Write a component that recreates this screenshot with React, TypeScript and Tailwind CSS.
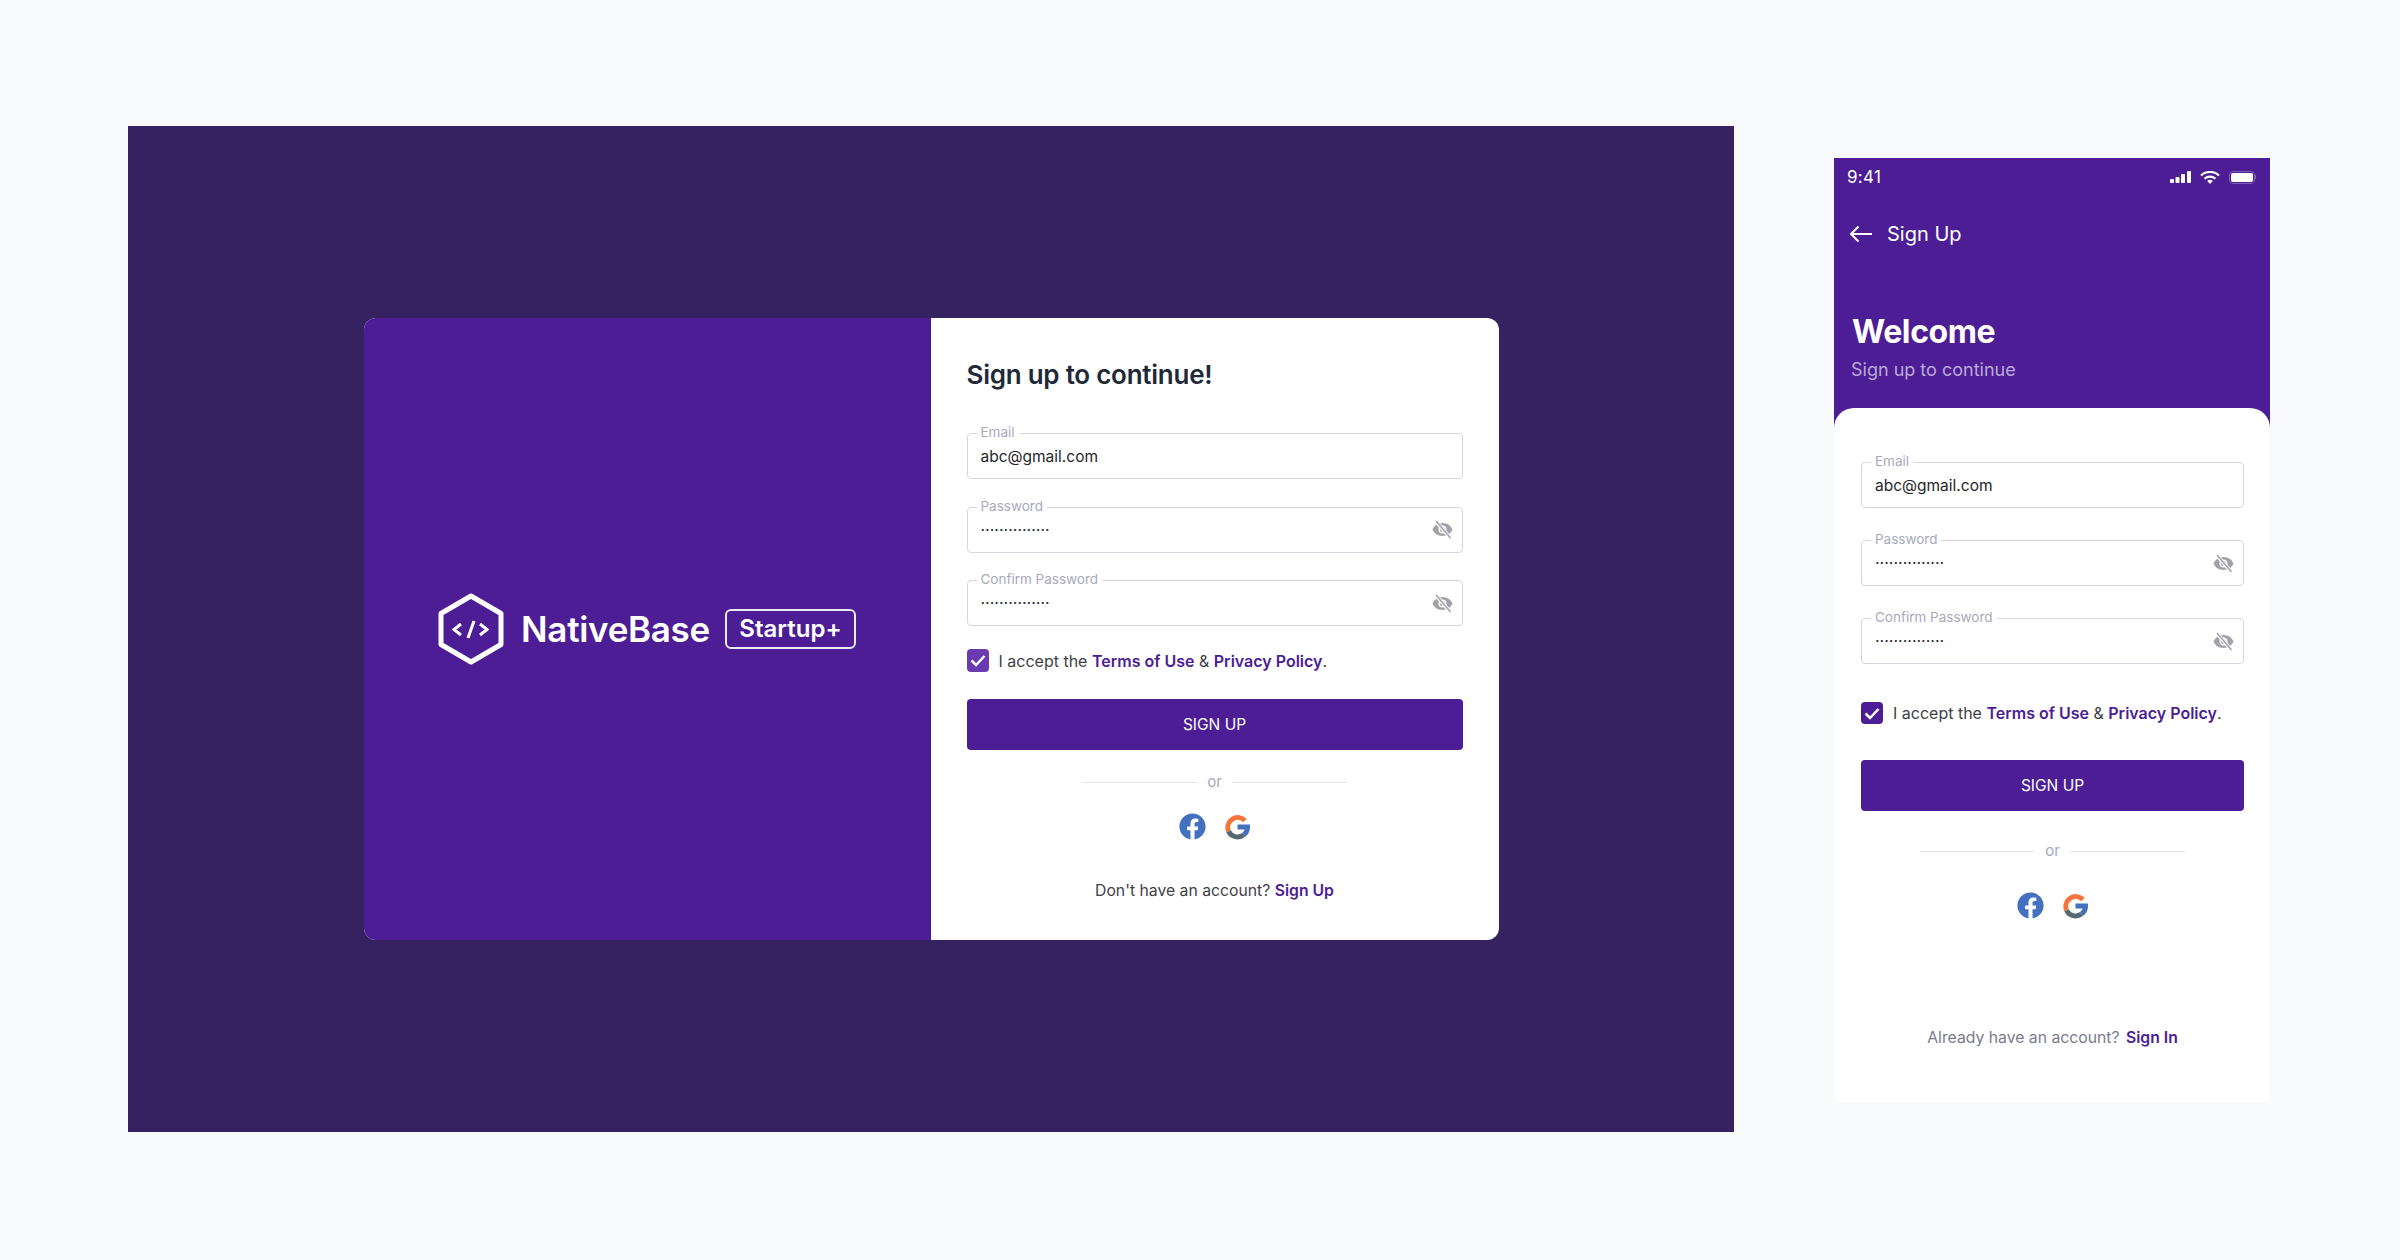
import React from "react";
import { FaFacebook } from "react-icons/fa";

function EyeOff() {
  return (
    <svg width="21" height="19" viewBox="0 0 21 19" className="shrink-0">
      <path
        d="M10.5 3C5.8 3 2 5.8.5 9.5 2 13.2 5.8 16 10.5 16s8.5-2.800 10-6.500C19 5.800 15.200 3 10.500 3z"
        fill="#a1a1aa"
      />
      <circle cx="10.5" cy="9.500" r="4" fill="#fff" />
      <circle cx="10.5" cy="9.500" r="2.600" fill="#a1a1aa" />
      <path d="M4 1.500l14 16" stroke="#fff" strokeWidth="3.500" />
      <path d="M4 1l14.500 17" stroke="#a1a1aa" strokeWidth="1.500" />
    </svg>
  );
}

function GoogleIcon() {
  return (
    <svg width="25" height="26" viewBox="0 0 25 26" className="shrink-0">
      <path d="M20 6.600A10 10 0 0 0 3.500 17.200" fill="none" stroke="#f4743b" strokeWidth="5" />
      <path d="M3.500 17.200A10 10 0 0 0 18.500 21" fill="none" stroke="#546a6c" strokeWidth="5" />
      <path d="M12.500 13h10A10 10 0 0 1 18.500 21" fill="none" stroke="#4470c0" strokeWidth="5" />
    </svg>
  );
}

function Field({ label, value, secret }: { label: string; value: string; secret?: boolean }) {
  return (
    <div className="relative h-[46px] flex items-center justify-between rounded border border-[#d6d6e2] pl-[13px] pr-[9px]">
      <span className="absolute left-[9px] -top-[11px] bg-white px-1 text-[13.500px] leading-[18px] text-[#a8a9bc]">
        {label}
      </span>
      {secret ? (
        <>
          <span className="text-[16px] leading-5 text-[#27272a]">{value}</span>
          <EyeOff />
        </>
      ) : (
        <span className="mt-[2px] text-[15.500px] leading-5 text-[#27272a]">{value}</span>
      )}
    </div>
  );
}

function SignUpForm({ mobile }: { mobile?: boolean }) {
  return (
    <>
      <div className={mobile ? "flex flex-col gap-8" : "flex flex-col gap-[27.5px]"}>
        <Field label="Email" value="abc@gmail.com" />
        <Field label="Password" value="···············" secret />
        <Field label="Confirm Password" value="···············" secret />
      </div>
      <div className={mobile ? "mt-[38px] flex items-center gap-[10px]" : "mt-[23px] flex items-center gap-[10px]"}>
        <span
          className={
            mobile
              ? "flex h-[22px] w-[22px] items-center justify-center rounded bg-[#4c1d95]"
              : "flex h-[23px] w-[22px] items-center justify-center rounded bg-[#6a3bb0]"
          }
        >
          <svg width="16" height="13" viewBox="0 0 16 13" fill="none">
            <path d="M1.500 6.500l4.500 4.500 8.500-9" stroke="#fff" strokeWidth="2.500" />
          </svg>
        </span>
        <p className="text-[16px] leading-5 text-[#3f3f46]">
          I accept the <b className="font-semibold text-[#4c1d95]">Terms of Use</b> &amp;{" "}
          <b className="font-semibold text-[#4c1d95]">Privacy Policy</b>.
        </p>
      </div>
      <button
        className={
          mobile
            ? "mt-9 h-[51px] w-full rounded bg-[#4c1d95] text-[15.500px] text-white"
            : "mt-[27px] h-[51px] w-full rounded bg-[#4c1d95] text-[15.500px] text-white"
        }
      >
        SIGN UP
      </button>
      <div className={mobile ? "mt-[30px] flex items-center justify-center gap-[10px]" : "mt-[22px] flex items-center justify-center gap-[10px]"}>
        <span className="h-px w-[115px] bg-[#e4e4e7]" />
        <span className="text-[15px] leading-5 text-[#a8a9bc]">or</span>
        <span className="h-px w-[115px] bg-[#e4e4e7]" />
      </div>
      <div className={mobile ? "mt-[31px] flex items-center justify-center gap-[19px]" : "mt-[21px] flex items-center justify-center gap-[19px]"}>
        <FaFacebook size={27} color="#4470c0" />
        <GoogleIcon />
      </div>
    </>
  );
}

export default function App() {
  return (
    <div className="flex h-[1260px] items-start overflow-hidden bg-[#f9fafc] pl-[128px] pt-[126px] [font-family:Inter,sans-serif]">
      <div className="flex h-[1006px] w-[1606px] shrink-0 items-center justify-center bg-[#372261]">
        <div className="flex h-[622px] w-[1135px] overflow-hidden rounded-xl bg-white">
          <div className="flex w-[567px] items-center justify-center bg-[#4c1d95]">
            <svg width="66" height="72" viewBox="0 0 66 72" fill="none" className="shrink-0">
              <path d="M33 3l30 17.500v31L33 69 3 51.500v-31z" stroke="#fff" strokeWidth="5" strokeLinejoin="round" />
              <path d="M23 31l-7 5.500 7 5.500M42 31l7 5.500-7 5.500M36 28l-6 17" stroke="#fff" strokeWidth="3" />
            </svg>
            <span className="ml-[17px] text-[35px] font-semibold leading-10 tracking-[-0.3px] text-white">NativeBase</span>
            <span className="ml-[15px] flex h-[40px] w-[131px] items-center justify-center rounded-md border-2 border-[#ece8f4] text-[24px] font-semibold text-white">
              Startup+
            </span>
          </div>
          <div className="flex-1 px-9 pt-10">
            <h2 className="text-[26px] font-semibold leading-[34px] tracking-[-0.25px] text-[#1f2937]">Sign up to continue!</h2>
            <div className="mt-[41px]">
              <SignUpForm />
            </div>
            <p className="mt-[41px] text-center text-[15.750px] leading-5 text-[#3f3f46]">
              Don't have an account? <b className="font-semibold text-[#4c1d95]">Sign Up</b>
            </p>
          </div>
        </div>
      </div>

      <div className="ml-[100px] mt-8 flex h-[944px] w-[436px] shrink-0 flex-col bg-[#4c1d95]">
        <div className="flex items-center justify-between pl-[13px] pr-[14px] pt-[9px]">
          <span className="text-[17px] leading-5 tracking-[0.3px] text-white">9:41</span>
          <div className="flex items-center gap-[9px]">
            <svg width="21" height="12" viewBox="0 0 21 12" fill="#fff">
              <rect x="0" y="8" width="4" height="4" rx="1" />
              <rect x="5.500" y="6" width="4" height="6" rx="1" />
              <rect x="11" y="3" width="4" height="9" rx="1" />
              <rect x="17" y="0" width="4" height="12" rx="1" />
            </svg>
            <svg width="20" height="13" viewBox="0 0 20 13" fill="none" stroke="#fff" strokeWidth="2.200">
              <path d="M1 4.500a13 13 0 0 1 18 0" />
              <path d="M4.500 7.800a8 8 0 0 1 11 0" />
              <path d="M10 13l-2.800-3a4 4 0 0 1 5.600 0z" fill="#fff" stroke="none" />
            </svg>
            <div className="flex items-center">
              <span className="flex h-[13px] w-[26px] items-center justify-center rounded-[4px] border border-[#7d5fb5]">
                <span className="h-[9px] w-[22px] rounded-[2px] bg-white" />
              </span>
              <span className="h-1 w-px bg-[#7d5fb5]" />
            </div>
          </div>
        </div>
        <div className="mt-[35px] flex h-6 items-center gap-[15px] pl-[15px]">
          <svg width="23" height="18" viewBox="0 0 23 18" fill="none" stroke="#fff" strokeWidth="2">
            <path d="M9.500 1.500L2 9l7.500 7.500M2 9h21" />
          </svg>
          <span className="text-[20px] leading-6 text-white">Sign Up</span>
        </div>
        <h1 className="ml-[18px] mt-[66px] text-[32px] font-bold leading-10 tracking-[-0.4px] text-white">Welcome</h1>
        <p className="ml-[17px] mt-[6px] text-[18px] leading-6 text-[#bba9d8]">Sign up to continue</p>
        <div className="mt-[26px] flex-1 rounded-t-[20px] bg-white pl-[27px] pr-[26px] pt-[54px]">
          <SignUpForm mobile />
          <p className="mt-[109px] text-center text-[15.750px] leading-5 text-[#7a7a8c]">
            Already have an account? <b className="ml-[2px] font-semibold text-[#4c1d95]">Sign In</b>
          </p>
        </div>
      </div>
    </div>
  );
}
